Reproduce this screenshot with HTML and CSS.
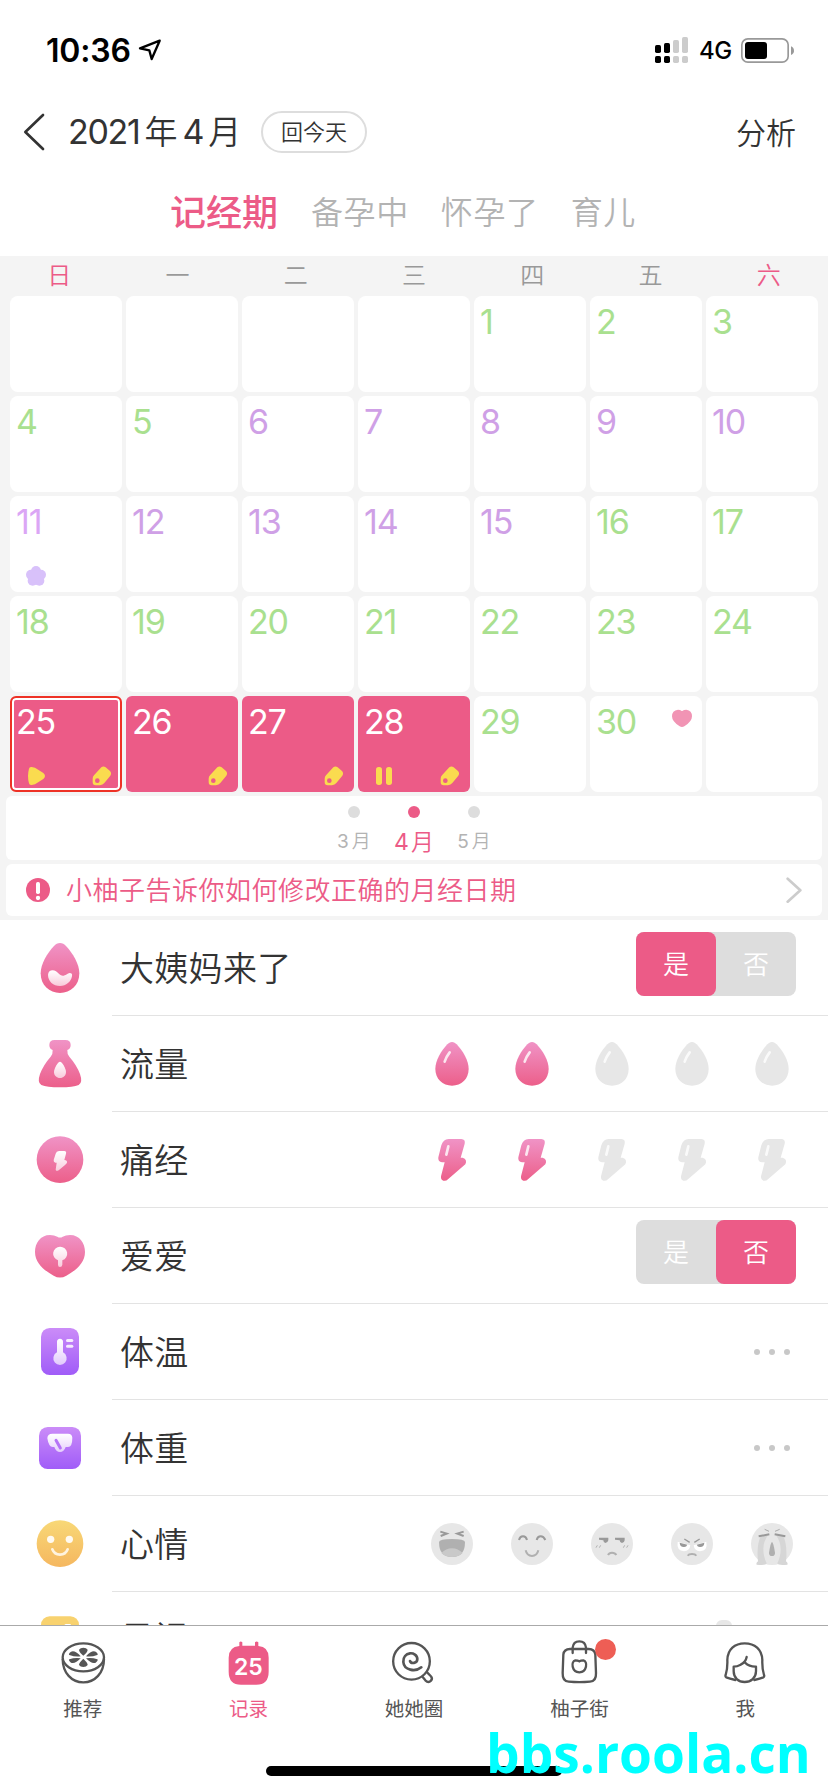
FILE: index.html
```html
<!DOCTYPE html>
<html lang="zh-CN">
<head>
<meta charset="utf-8">
<title>记录</title>
<link rel="stylesheet" href="styles.css">
</head>
<body>
<svg class="defs" width="0" height="0" aria-hidden="true">
  <defs>
    <linearGradient id="pink" x1="0" y1="0" x2="0" y2="1"><stop offset="0" stop-color="#f093c6"/><stop offset="1" stop-color="#ec5f8a"/></linearGradient>
    <linearGradient id="purple" x1="0" y1="0" x2="0" y2="1"><stop offset="0" stop-color="#cb8cf8"/><stop offset="1" stop-color="#a05cf8"/></linearGradient>
    <linearGradient id="gold" x1="0" y1="0" x2="0" y2="1"><stop offset="0" stop-color="#f8d877"/><stop offset="1" stop-color="#f5b75f"/></linearGradient>
    <linearGradient id="shine" x1="0" y1="0" x2="0" y2="1"><stop offset="0" stop-color="#fff"/><stop offset="1" stop-color="#fff" stop-opacity=".65"/></linearGradient>
    <symbol id="drop" viewBox="24 342 180 180">
      <path d="M114 366C108 366 104 369 100 373C81 393 64 422 64 447C64 477 86 497 114 497S164 477 164 447C164 422 147 393 128 373C124 369 120 366 114 366Z"/>
      <path d="M107 397Q96 411 92 425" fill="none" stroke="#fff" stroke-opacity=".8" stroke-width="8" stroke-linecap="round"/>
    </symbol>
    <symbol id="bolt" viewBox="24 630 180 180">
      <path d="M104 657H142Q155 658 152 671L140 713H146Q161 718 154 733L102 778Q96 784 88 782Q80 780 81 769L92 727H84Q71 726 73 712L82 676Q87 658 104 657Z"/>
      <path d="M103 679L97 704" fill="none" stroke="#fff" stroke-opacity=".8" stroke-width="8" stroke-linecap="round"/>
    </symbol>
    <symbol id="tag" viewBox="276 858 60 60">
      <path fill="#fadb4f" fill-rule="evenodd" d="M304 862Q310 857 317 862L330 873Q336 879 331 887L313 909Q308 915 300 916H287Q278 916 278 906V896Q278 890 282 886ZM292 895A7 7 0 1 0 292 909A7 7 0 1 0 292 895Z"/>
    </symbol>
  </defs>
</svg>

<header class="status">
  <span class="time">10:36</span>
  <svg class="loc" viewBox="414 114 72 72"><path d="M479 122L420 145L448 151L455 177Z" fill="none" stroke="#000" stroke-width="7" stroke-linejoin="round"/></svg>
  <svg class="signal" viewBox="720 108 105 84">
    <g><rect x="723" y="135" width="18" height="24" rx="5"/><rect x="750" y="129" width="18" height="30" rx="5"/><rect x="723" y="168" width="18" height="21" rx="5"/><rect x="750" y="168" width="18" height="21" rx="5"/></g>
    <g fill="#ccc"><rect x="777" y="120" width="18" height="39" rx="5"/><rect x="804" y="111" width="18" height="48" rx="5"/><rect x="777" y="168" width="18" height="21" rx="5"/><rect x="804" y="168" width="18" height="21" rx="5"/></g>
  </svg>
  <span class="net">4G</span>
  <svg class="battery" viewBox="978 108 165 81"><rect x="983.500" y="113.500" width="139" height="70" rx="18" fill="none" stroke="#999" stroke-width="5"/><rect x="993" y="123" width="66" height="51" rx="9"/><path d="M1131 136Q1140 140 1140 149T1131 162Z" fill="#999"/></svg>
</header>

<nav class="nav">
  <svg class="back" viewBox="66 336 72 120"><path d="M129 345L76 396L129 447" fill="none" stroke="#333" stroke-width="8" stroke-linecap="round" stroke-linejoin="round"/></svg>
  <h1 class="title"><span>2021</span><span class="han">年</span><span>4</span><span class="han">月</span></h1>
  <button class="today">回今天</button>
  <span class="analyse">分析</span>
</nav>

<div class="modes"><span class="mode on">记经期</span><span class="mode">备孕中</span><span class="mode">怀孕了</span><span class="mode">育儿</span></div>

<section class="calendar">
  <div class="week"><span class="end">日</span><span>一</span><span>二</span><span>三</span><span>四</span><span>五</span><span class="end">六</span></div>
  <div class="grid">
    <div class="day"></div><div class="day"></div><div class="day"></div><div class="day"></div><div class="day">1</div><div class="day">2</div><div class="day">3</div>
    <div class="day">4</div><div class="day">5</div><div class="day fertile">6</div><div class="day fertile">7</div><div class="day fertile">8</div><div class="day fertile">9</div><div class="day fertile">10</div>
    <div class="day ovulation">11<svg class="mark left" viewBox="78 258 60 60"><g fill="#d8c1fa"><circle cx="108" cy="273" r="15"/><circle cx="93" cy="284" r="15"/><circle cx="123" cy="284" r="15"/><circle cx="98" cy="302" r="15"/><circle cx="118" cy="302" r="15"/><circle cx="108" cy="289" r="19"/></g></svg></div><div class="day fertile">12</div><div class="day fertile">13</div><div class="day fertile">14</div><div class="day fertile">15</div><div class="day">16</div><div class="day">17</div>
    <div class="day">18</div><div class="day">19</div><div class="day">20</div><div class="day">21</div><div class="day">22</div><div class="day">23</div><div class="day">24</div>
    <div class="day period selected">25<svg class="mark left" viewBox="78 858 60 60"><path fill="#fadb4f" d="M95 861L105 863L130 879Q140 888 130 897L105 913L95 915Q88 916 87 910Q81 888 87 866Q88 860 95 861Z"/></svg><svg class="mark right"><use href="#tag"/></svg></div>
    <div class="day period">26<svg class="mark right"><use href="#tag"/></svg></div>
    <div class="day period">27<svg class="mark right"><use href="#tag"/></svg></div>
    <div class="day period">28<svg class="mark left" viewBox="1122 858 60 60"><g fill="#fadb4f"><rect x="1128" y="861" width="18" height="54" rx="8"/><rect x="1158" y="861" width="18" height="54" rx="8"/></g></svg><svg class="mark right"><use href="#tag"/></svg></div>
    <div class="day">29</div>
    <div class="day">30<svg class="mark top" viewBox="774 144 60 60"><path fill="#f194b4" d="M792 149Q799 149 802 152Q804 154 806 152Q809 149 817 149Q834 151 834 169Q834 185 811 199Q804 203 797 199Q774 185 774 169Q774 151 792 149Z"/></svg></div>
    <div class="day"></div>
  </div>
  <div class="months">
    <div class="month"><i></i><span>3<b>月</b></span></div>
    <div class="month on"><i></i><span>4<b>月</b></span></div>
    <div class="month"><i></i><span>5<b>月</b></span></div>
  </div>
  <div class="tip">
    <svg class="alert" viewBox="78 234 72 72"><circle cx="114" cy="270" r="36" fill="#ec5b87"/><rect x="108" y="246" width="12" height="36" rx="5" fill="#fff"/><circle cx="114" cy="294" r="6.500" fill="#fff"/></svg>
    <span class="tip-text">小柚子告诉你如何修改正确的月经日期</span>
    <svg class="go" viewBox="1116 654 48 78"><path d="M1121 659L1159 694L1121 728" fill="none" stroke="#ccc" stroke-width="8" stroke-linecap="round" stroke-linejoin="round"/></svg>
  </div>
</section>

<main class="rows">
  <div class="row">
    <svg class="icon" viewBox="90 414 180 180"><path fill="url(#pink)" d="M180 429C173 429 167 433 162 438C142 459 122 492 122 520C122 556 148 579 180 579S238 556 238 520C238 492 218 459 198 438C193 433 187 429 180 429Z"/><path fill="url(#shine)" d="M144 524C145 511 158 508 168 514C177 520 181 529 191 527C201 525 202 520 209 519Q218 519 216 529C213 545 199 558 180 558C160 558 144 544 144 524Z"/></svg>
    <span class="label">大姨妈来了</span>
    <div class="toggle"><span class="opt on">是</span><span class="opt">否</span></div>
  </div>
  <div class="row">
    <svg class="icon" viewBox="90 702 180 180"><path fill="url(#pink)" d="M164 720H196Q212 720 212 735Q212 747 202 750Q201 762 208 770Q230 795 240 822Q249 848 236 855Q220 862 180 862T124 855Q111 848 120 822Q130 795 152 770Q159 762 158 750Q148 747 148 735Q148 720 164 720Z"/><path fill="url(#shine)" d="M180 785C174 785 162 805 162 816C162 827 170 834 180 834S198 827 198 816C198 805 186 785 180 785Z"/></svg>
    <span class="label">流量</span>
    <div class="scale"><svg class="on"><use href="#drop"/></svg><svg class="on"><use href="#drop"/></svg><svg><use href="#drop"/></svg><svg><use href="#drop"/></svg><svg><use href="#drop"/></svg></div>
  </div>
  <div class="row">
    <svg class="icon" viewBox="90 120 180 180"><circle cx="180" cy="209" r="70" fill="url(#pink)"/><path fill="url(#shine)" d="M177 183H193Q200 184 198 191L193 210Q202 211 201 218Q199 222 178 239Q169 246 167 239L170 218H166Q160 217 161 210L167 191Q169 184 177 183Z"/></svg>
    <span class="label">痛经</span>
    <div class="scale"><svg class="on"><use href="#bolt"/></svg><svg class="on"><use href="#bolt"/></svg><svg><use href="#bolt"/></svg><svg><use href="#bolt"/></svg><svg><use href="#bolt"/></svg></div>
  </div>
  <div class="row">
    <svg class="icon" viewBox="90 408 180 180"><path fill="url(#pink)" d="M150 435Q163 435 172 440Q180 445 188 440Q197 435 210 435C239 435 255 459 255 486C255 520 225 543 199 557Q180 568 161 557C135 543 105 520 105 486C105 459 121 435 150 435Z"/><path fill="url(#shine)" d="M180 470A21 21 0 0 1 187 511V524Q186 531 180 531T174 524V511A21 21 0 0 1 180 470Z"/></svg>
    <span class="label">爱爱</span>
    <div class="toggle"><span class="opt">是</span><span class="opt on">否</span></div>
  </div>
  <div class="row">
    <svg class="icon" viewBox="90 696 180 180"><rect x="123" y="714" width="114" height="141" rx="26" fill="url(#purple)"/><path fill="url(#shine)" d="M180 746Q189 747 189 755V787A20 20 0 1 1 171 787V755Q171 747 180 746Z"/><rect x="198" y="747" width="22" height="9" rx="4.500" fill="#fff" opacity=".85"/><rect x="198" y="764" width="22" height="9" rx="4.500" fill="#fff" opacity=".85"/></svg>
    <span class="label">体温</span>
    <div class="more"><i></i><i></i><i></i></div>
  </div>
  <div class="row">
    <svg class="icon" viewBox="90 84 180 180"><rect x="117" y="111" width="126" height="126" rx="26" fill="url(#purple)"/><path fill="url(#shine)" d="M157 131H204Q216 131 217 143Q217 171 204 171H197Q192 186 180 186Q168 186 163 171H158Q146 171 142 145Q142 131 157 131Z"/><path d="M168 151L181 174" stroke="#b673f7" stroke-width="9" stroke-linecap="round"/></svg>
    <span class="label">体重</span>
    <div class="more"><i></i><i></i><i></i></div>
  </div>
  <div class="row">
    <svg class="icon" viewBox="90 372 180 180"><circle cx="180" cy="461" r="70" fill="url(#gold)"/><circle cx="152" cy="448" r="11" fill="#fffaf0"/><circle cx="208" cy="448" r="11" fill="#fffaf0"/><path d="M157 478Q163 494 180 494T203 478" fill="none" stroke="#fff3de" stroke-width="8" stroke-linecap="round"/></svg>
    <span class="label">心情</span>
    <div class="scale faces">
      <svg viewBox="24 102 180 180"><circle cx="114" cy="192" r="63"/><g fill="none" stroke="#999" stroke-width="6"><path d="M79 155L98 161L80 168"/><path d="M149 155L130 161L149 168"/></g><path fill="#b0b0b0" d="M75 186Q76 177 114 177T153 186Q153 231 114 231Q75 231 75 186Z"/><path fill="#c9c9c9" d="M82 219Q96 205 114 205T146 219Q133 231 114 231Q94 231 82 219Z"/></svg>
      <svg viewBox="264 102 180 180"><circle cx="354" cy="192" r="63"/><g fill="none" stroke="#b0b0b0" stroke-width="6"><path stroke="#999" d="M315 180Q318 169 327 169T339 180M368 180Q371 169 380 169T394 180"/><path d="M335 211Q339 228 354 228T373 211"/></g></svg>
      <svg viewBox="504 102 180 180"><circle cx="594" cy="192" r="63"/><path fill="#999" d="M555 173H583V181Q581 189 574 189Q568 188 568 181L555 179ZM603 173H632V181Q631 189 624 189Q617 188 617 181L603 179Z"/><path d="M582 225Q585 218 594 218T607 225" fill="none" stroke="#b0b0b0" stroke-width="6"/><path d="M546 203L550 196M556 203L560 196M628 203L632 196M638 203L642 196" stroke="#b0b0b0" stroke-width="3"/></svg>
      <svg viewBox="744 102 180 180"><circle cx="834" cy="192" r="63"/><path fill="#fff" d="M791 185L829 196Q827 213 810 214Q787 212 791 185ZM877 185L839 196Q841 213 858 214Q882 212 877 185Z"/><path fill="#999" d="M797 188L820 194Q817 202 809 201Q798 201 797 188ZM871 188L848 194Q851 202 859 201Q870 201 871 188Z"/><path d="M811 177L827 187M857 177L841 187" stroke="#999" stroke-width="4"/><path d="M821 227Q824 222 834 222T847 227" fill="none" stroke="#b0b0b0" stroke-width="6"/></svg>
      <svg viewBox="984 102 180 180"><circle cx="1074" cy="192" r="63"/><path fill="#d6d6d6" d="M1040 168L1062 166Q1048 185 1048 207Q1048 230 1058 250Q1056 257 1028 254Q1025 250 1032 244Q1027 198 1040 168ZM1108 168L1086 166Q1100 185 1100 207Q1100 230 1090 250Q1092 257 1120 254Q1123 250 1116 244Q1121 198 1108 168Z"/><path d="M1034 169L1066 163M1114 169L1082 163" stroke="#999" stroke-width="6"/><path d="M1052 148L1065 154M1097 148L1083 154" stroke="#aaa" stroke-width="3"/><path fill="#b0b0b0" d="M1074 186Q1078 186 1083 218Q1083 228 1074 228T1065 218Q1070 186 1074 186Z"/></svg>
    </div>
  </div>
  <div class="row last">
    <svg class="icon" viewBox="90 660 180 180"><rect x="123" y="679" width="114" height="141" rx="26" fill="#f8d26f"/><path d="M191 706L197 702H212V724H191Z" fill="#fff"/></svg>
    <span class="label">日记</span>
    <div class="cup"></div>
  </div>
</main>

<footer class="tabs">
  <div class="tab">
    <svg viewBox="158 730 180 180"><g fill="none" stroke="#555" stroke-width="7"><ellipse cx="249" cy="803" rx="62" ry="42"/><path d="M187 807C187 850 214 878 249 878S311 850 311 807"/></g><g fill="#555"><path d="M249 798Q236 787 236 780Q240 774 249 774T262 780Q262 787 249 798Z"/><path d="M249 807Q236 819 236 826Q240 832 249 832T262 826Q262 819 249 807Z"/><path d="M241 800Q224 802 207 796Q203 793 212 786Q224 781 241 800Z"/><path d="M257 800Q274 802 291 796Q295 793 286 786Q274 781 257 800Z"/><path d="M241 806Q224 803 207 809Q203 812 212 819Q224 824 241 806Z"/><path d="M257 806Q274 803 291 809Q295 812 286 819Q274 824 257 806Z"/></g></svg>
    <span>推荐</span>
  </div>
  <div class="tab on">
    <svg viewBox="655 730 180 180"><path fill="#ec5b87" d="M719 758Q723 753 728 758V768H766V758Q771 753 776 758V769Q807 771 807 804V846Q807 885 770 885H724Q687 885 687 846V804Q687 772 719 769Z"/></svg>
    <em class="date">25</em>
    <span>记录</span>
  </div>
  <div class="tab">
    <svg viewBox="72 100 180 180"><g fill="none" stroke="#555" stroke-width="7" stroke-linecap="round"><circle cx="154.500" cy="185" r="55"/><path stroke-width="8" d="M150 184C153 193 172 192 172 178C172 166 160 160 150 161C138 163 129 172 130 187C132 212 166 218 184 203"/><path d="M188 232L196 242Q205 251 213 243Q219 236 212 229L202 219"/></g></svg>
    <span>她她圈</span>
  </div>
  <div class="tab">
    <svg viewBox="407 460 180 180"><g fill="none" stroke="#555" stroke-width="7" stroke-linecap="round"><path d="M467 508H523Q541 508 543 525L545 580Q546 605 527 606Q495 609 463 606Q444 605 445 580L447 525Q449 508 467 508Z"/><path d="M475 520V504Q477 485 495 485T515 504V520"/><path d="M483 542Q490 542 495 545Q500 542 507 542C521 546 518 577 495 578C472 577 469 546 483 542Z"/></g></svg>
    <i class="dot"></i>
    <span>柚子街</span>
  </div>
  <div class="tab">
    <svg viewBox="904 460 180 180"><g fill="none" stroke="#555" stroke-width="7" stroke-linecap="round" stroke-linejoin="round"><path d="M965 601Q947 597 938 593Q934 591 936 586Q942 568 941 541C942 509 963 491 993 491S1045 509 1046 541Q1045 568 1051 586Q1053 591 1049 593Q1040 597 1022 601"/><path d="M999 532Q996 548 981 555Q970 561 960 561V575C960 594 974 607 993 607S1027 594 1027 575V561Q1008 562 994 549"/></g></svg>
    <span>我</span>
  </div>
  <div class="home"></div>
  <div class="watermark">bbs.roola.cn</div>
</footer>
</body>
</html>
```
FILE: styles.css
```css
* { box-sizing: border-box; }
body {
  margin: 0;
  width: 828px;
  height: 1792px;
  overflow: hidden;
  display: flex;
  flex-direction: column;
  background: #fff;
  color: #333;
  font-family: Inter, "Noto Sans CJK SC", sans-serif;
}
.defs { position: absolute; }
svg { display: block; flex: none; }

.status { height: 88px; display: flex; align-items: center; padding: 12px 34px 0 46px; flex: none; }
.time { width: 92px; font-size: 32px; font-weight: 600; color: #000; letter-spacing: -.2px; }
.loc { width: 24px; height: 24px; }
.signal { width: 35px; height: 28px; margin-left: auto; }
.net { width: 46px; padding-left: 10px; font-size: 24px; font-weight: 500; color: #000; letter-spacing: -.4px; }
.battery { width: 55px; height: 27px; margin-left: 5px; margin-right: -1px; }

.nav { height: 88px; display: flex; align-items: center; padding: 0 32px 0 22px; flex: none; }
.back { width: 24px; height: 40px; }
.title { display: flex; align-items: baseline; width: 193px; margin: 0 0 0 22px; font-size: 34px; line-height: 48px; font-weight: 400; letter-spacing: -1.3px; white-space: nowrap; }
.title .han { font-size: 33px; font-weight: 350; letter-spacing: 0; margin: 0 5px; }
.today { width: 106px; height: 42px; padding: 0; border: 2px solid #ddd; border-radius: 21px; background: #fff; color: #333; font: 350 22px/36px Inter, "Noto Sans CJK SC", sans-serif; }
.analyse { margin: -3px 0 0 auto; font-size: 30px; font-weight: 350; }

.modes { height: 80px; display: flex; align-items: center; padding: 0 0 12px 170px; flex: none; color: #b3b3b3; font-size: 32px; font-weight: 350; letter-spacing: .6px; }
.mode { margin-right: 32px; }
.mode.on { color: #ec5b87; font-size: 36px; font-weight: 500; letter-spacing: 0; margin-right: 33px; }

.calendar { height: 664px; flex: none; background: #f4f4f4; }
.week { height: 40px; display: grid; grid-template-columns: repeat(7, 1fr); text-align: center; color: #999; font-size: 24px; font-weight: 350; line-height: 40px; }
.week .end { color: #ec5b87; }
.grid { display: grid; grid-template-columns: repeat(7, 112px); grid-auto-rows: 96px; gap: 4px; padding: 0 10px 4px; }
.day { position: relative; padding: 6px 0 0 6px; border-radius: 8px; background: #fff; color: #a9e08f; font-size: 34px; font-weight: 400; line-height: 40px; letter-spacing: -1.2px; }
.day.fertile { color: #cfa0e6; }
.day.ovulation { color: #dba6f5; }
.day.period { background: #ec5b87; color: #fff; border-radius: 6px; }
.day.selected { padding: 4px 0 0 4px; border: 2px solid #ee3226; box-shadow: inset 0 0 0 2px #fff; }
.mark { position: absolute; width: 20px; height: 20px; }
.mark.left { left: 16px; bottom: 6px; }
.mark.right { right: 10px; bottom: 6px; }
.mark.top { right: 10px; top: 12px; }
.selected .mark { margin: -2px; }

.months { height: 64px; margin: 0 6px 4px; border-radius: 6px; background: #fff; display: flex; justify-content: center; }
.month { width: 60px; display: flex; flex-direction: column; align-items: center; padding-top: 10px; color: #b3b3b3; font-size: 19px; font-weight: 400; }
.month i { width: 12px; height: 12px; border-radius: 50%; background: #ddd; }
.month span { display: flex; align-items: baseline; gap: 3px; line-height: 28px; margin-top: 10px; }
.month b { font-weight: 350; }
.month.on { color: #ec5b87; font-size: 23px; }
.month.on i { background: #ec5b87; }
.month.on span { gap: 2px; }
.tip { height: 52px; margin: 0 6px; padding: 0 20px; border-radius: 6px; background: #fff; display: flex; align-items: center; color: #ec5b87; }
.alert { width: 24px; height: 24px; }
.tip-text { margin: 2px 0 0 16px; font-size: 26px; font-weight: 350; letter-spacing: .5px; line-height: 36px; }
.go { width: 16px; height: 26px; margin-left: auto; }

.rows { height: 705px; flex: none; overflow: hidden; }
.row { position: relative; height: 96px; display: flex; align-items: center; padding: 0 26px 0 30px; }
.row::after { content: ""; position: absolute; left: 112px; right: 0; bottom: 0; height: 1px; background: #e3e3e3; }
.icon { width: 60px; height: 60px; }
.label { margin: 2px 0 0 30px; font-size: 34px; font-weight: 350; letter-spacing: .3px; line-height: 48px; }
.last .label { margin-top: -4px; }
.toggle { display: flex; margin: -8px 6px 0 auto; border-radius: 8px; background: #ddd; }
.opt { width: 80px; height: 64px; border-radius: 8px; color: #fff; font-size: 26px; font-weight: 350; line-height: 66px; text-align: center; }
.opt.on { background: #ec5b87; }
.scale { display: flex; gap: 20px; margin-left: auto; fill: #e7e7e7; }
.scale svg { width: 60px; height: 60px; }
.scale .on { fill: url(#pink); }
.more { display: flex; gap: 9px; margin: 0 12px 0 auto; }
.more i { width: 6px; height: 6px; border-radius: 50%; background: #c8c8c8; }
.cup { width: 16px; height: 40px; margin: 0 70px 0 auto; border-radius: 6px; background: #e7e7e7; }

.tabs { position: relative; height: 167px; flex: none; display: grid; grid-template-columns: repeat(5, 1fr); border-top: 1px solid #aaa; background: #fff; color: #555; }
.tab { position: relative; display: flex; flex-direction: column; align-items: center; padding-top: 7px; font-size: 19.500px; font-weight: 400; line-height: 24px; }
.tab svg { width: 60px; height: 60px; }
.tab span { margin-top: 4px; }
.tab.on { color: #ec5b87; }
.date { position: absolute; top: 26px; left: 0; right: 0; text-align: center; font-style: normal; font-weight: 600; font-size: 23px; color: #fff; line-height: 30px; }
.dot { position: absolute; left: 98px; top: 13px; width: 21px; height: 21px; border-radius: 50%; background: #ee5e55; }
.home { position: absolute; left: 266px; top: 140px; width: 296px; height: 10px; border-radius: 5px; background: #000; }
.watermark { position: absolute; left: 486px; top: 100px; color: #0ff; font: 700 53.200px/54px "Open Sans", "Noto Sans", sans-serif; white-space: nowrap; }
```
